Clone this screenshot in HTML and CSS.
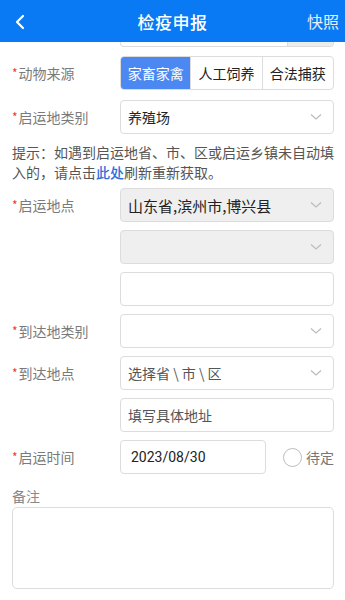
FILE: index.html
```html
<!DOCTYPE html>
<html lang="zh">
<head>
<meta charset="utf-8">
<link rel="stylesheet" href="styles.css">
</head>
<body>
<header class="topbar">
  <span class="back">
    <svg width="12" height="16" viewBox="0 0 12 16"><path d="M9 2 L3 8 L9 14" fill="none" stroke="#fff" stroke-width="2.2" stroke-linecap="round" stroke-linejoin="round"/></svg>
  </span>
  <h1 class="title">检疫申报</h1>
  <span class="action">快照</span>
</header>

<div class="cutoff"><span class="cutoff-main"></span><span class="cutoff-btn"></span></div>

<main class="form">
  <div class="row row-seg">
    <label class="lbl"><i>*</i>动物来源</label>
    <div class="seg">
      <span class="seg-item active">家畜家禽</span>
      <span class="seg-item">人工饲养</span>
      <span class="seg-item">合法捕获</span>
    </div>
  </div>

  <div class="row">
    <label class="lbl"><i>*</i>启运地类别</label>
    <div class="box"><span class="val">养殖场</span><svg class="chev" width="12" height="8" viewBox="0 0 12 8"><path d="M1 1.5 L6 6 L11 1.5" fill="none" stroke="#bcbcbc" stroke-width="1.2"/></svg></div>
  </div>

  <p class="hint">提示：如遇到启运地省、市、区或启运乡镇未自动填<br>入的，请点击<span class="link">此处</span>刷新重新获取。</p>

  <div class="row">
    <label class="lbl"><i>*</i>启运地点</label>
    <div class="box grey"><span class="val strong">山东省,滨州市,博兴县</span><svg class="chev" width="12" height="8" viewBox="0 0 12 8"><path d="M1 1.5 L6 6 L11 1.5" fill="none" stroke="#bcbcbc" stroke-width="1.2"/></svg></div>
  </div>
  <div class="row">
    <span class="lbl"></span>
    <div class="box grey"><span class="val"></span><svg class="chev" width="12" height="8" viewBox="0 0 12 8"><path d="M1 1.5 L6 6 L11 1.5" fill="none" stroke="#bcbcbc" stroke-width="1.2"/></svg></div>
  </div>
  <div class="row">
    <span class="lbl"></span>
    <div class="box"><span class="val"></span></div>
  </div>

  <div class="row">
    <label class="lbl"><i>*</i>到达地类别</label>
    <div class="box"><span class="val"></span><svg class="chev" width="12" height="8" viewBox="0 0 12 8"><path d="M1 1.5 L6 6 L11 1.5" fill="none" stroke="#bcbcbc" stroke-width="1.2"/></svg></div>
  </div>
  <div class="row">
    <label class="lbl"><i>*</i>到达地点</label>
    <div class="box"><span class="val ph">选择省 \ 市 \ 区</span><svg class="chev" width="12" height="8" viewBox="0 0 12 8"><path d="M1 1.5 L6 6 L11 1.5" fill="none" stroke="#bcbcbc" stroke-width="1.2"/></svg></div>
  </div>
  <div class="row">
    <span class="lbl"></span>
    <div class="box"><span class="val ph">填写具体地址</span></div>
  </div>

  <div class="row">
    <label class="lbl"><i>*</i>启运时间</label>
    <div class="date-line">
      <div class="box date"><span class="val num">2023/08/30</span></div>
      <span class="radio"></span>
      <span class="radio-text">待定</span>
    </div>
  </div>

  <div class="remark-lbl">备注</div>
  <div class="remark"></div>
</main>
</body>
</html>
```

FILE: styles.css
```css
* { box-sizing: border-box; }
html, body { margin: 0; padding: 0; }
body {
  width: 345px;
  height: 600px;
  overflow: hidden;
  background: #fff;
  font-family: "Noto Sans CJK SC", "Noto Sans", sans-serif;
  color: #333;
}

.topbar {
  height: 42px;
  background: #0a79f4;
  display: flex;
  align-items: center;
  color: #fff;
}
.back {
  width: 38px;
  display: flex;
  justify-content: center;
  padding-left: 2px;
  margin-top: 1px;
}
.title {
  flex: 1;
  margin: 0;
  text-align: center;
  font-size: 17px;
  font-weight: 500;
  letter-spacing: 0.5px;
}
.action {
  width: 38px;
  font-size: 16px;
  color: #e6f0ff;
  padding-right: 6px;
  text-align: right;
}

.cutoff {
  margin-left: 120px;
  width: 214px;
  height: 5px;
  display: flex;
  border: 1px solid #dcdcdc;
  border-top: none;
  border-radius: 0 0 4px 4px;
  overflow: hidden;
}
.cutoff-main { flex: 1; }
.cutoff-btn { width: 46px; background: #ececec; border-left: 1px solid #dcdcdc; }

.form { padding: 9px 11px 0 12px; }

.row {
  display: grid;
  grid-template-columns: 108px 214px;
  align-items: center;
  margin-bottom: 8px;
}
.row-seg { margin-bottom: 10px; }

.lbl {
  font-size: 14px;
  color: #7a7a7a;
  white-space: nowrap;
  display: flex;
  align-items: center;
}
.lbl i {
  font-style: normal;
  color: #e5393b;
  font-size: 12px;
  margin-right: 1px;
  position: relative;
  top: -1px;
}

.seg {
  display: flex;
  height: 34px;
  border: 1px solid #dcdcdc;
  border-radius: 4px;
  overflow: hidden;
}
.seg-item {
  display: flex;
  align-items: center;
  justify-content: center;
  font-size: 14px;
  color: #222;
  border-left: 1px solid #dcdcdc;
  width: 72px;
}
.seg-item:first-child { border-left: none; width: 70px; }
.seg-item.active { background: #4c88f2; color: #fff; }

.box {
  height: 34px;
  border: 1px solid #dcdcdc;
  border-radius: 4px;
  display: flex;
  align-items: center;
  justify-content: space-between;
  padding: 0 11px 0 7px;
  background: #fff;
}
.box.grey { background: #efefef; }
.val { font-size: 14px; color: #222; }
.val.strong { font-size: 15px; }
.val.ph { color: #555; }
.val.num { font-family: "Roboto", "Noto Sans CJK SC", sans-serif; font-size: 14px; color: #222; padding-left: 3px; }
.chev { flex: none; }

.hint {
  margin: 6px 0 6px 0;
  font-size: 14px;
  line-height: 20px;
  color: #555;
  white-space: nowrap;
}
.hint .link { color: #2f6fdb; font-weight: 500; }

.date-line {
  display: flex;
  align-items: center;
  white-space: nowrap;
}
.box.date { width: 146px; flex: none; }
.radio {
  flex: none;
  width: 19px;
  height: 19px;
  border: 1px solid #bdbdbd;
  border-radius: 50%;
  margin-left: 17px;
}
.radio-text {
  font-size: 14px;
  color: #777;
  margin-left: 4px;
}

.remark-lbl {
  margin-top: 12px;
  font-size: 14px;
  line-height: 20px;
  color: #888;
}
.remark {
  margin-top: 1px;
  height: 82px;
  border: 1px solid #dcdcdc;
  border-radius: 5px;
}
```
